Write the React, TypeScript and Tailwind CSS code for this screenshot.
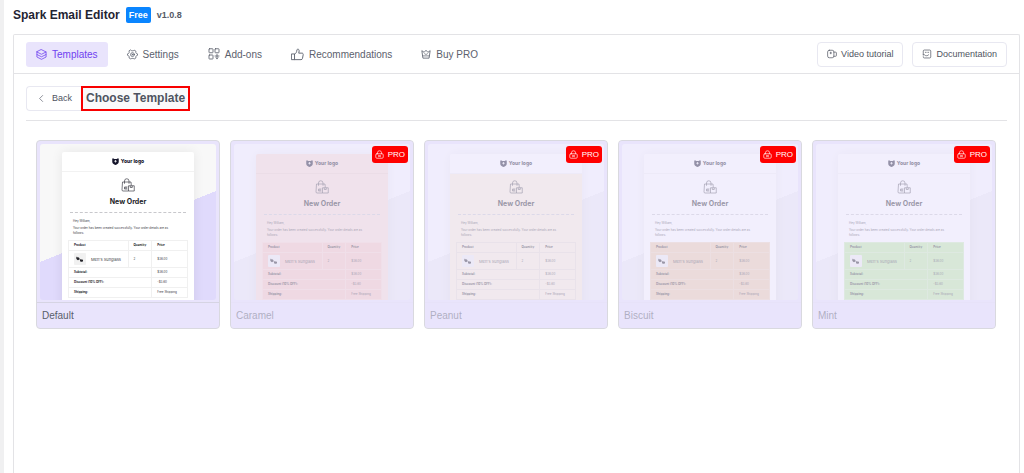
import type { ReactNode } from 'react'

interface IconProps {
  className?: string
  children: ReactNode
}

const Icon = ({ className = 'w-[11px] h-[11px]', children }: IconProps) => (
  <svg
    className={`${className} shrink-0`}
    viewBox="0 0 24 24"
    fill="none"
    stroke="currentColor"
    strokeWidth="1.7"
    strokeLinecap="round"
    strokeLinejoin="round"
    aria-hidden="true"
  >
    {children}
  </svg>
)

const LayersIcon = () => (
  <Icon>
    <path d="M12 1.500 22 6.500 12 11.500 2 6.500Z" />
    <path d="M2 6.500v5.500l10 5 10-5V6.500" />
    <path d="M2 12v5.500l10 5 10-5V12" />
  </Icon>
)

const SettingsIcon = () => (
  <Icon>
    <path d="M8.500 2.500 10.500 4h3l2-1.500 4 2.300-.3 2.700 1.300 2.200 2.500 1v3l-2.500 1-1.300 2.200.3 2.700-4 2.300-2-1.500h-3l-2 1.500-4-2.300.3-2.700-1.300-2.200-2.500-1v-3l2.500-1 1.300-2.200-.3-2.700Z" />
    <circle cx="12" cy="12.200" r="4.200" />
    <circle cx="12" cy="12.200" r="1" />
  </Icon>
)

const AddonsIcon = () => (
  <Icon className="w-3 h-3">
    <rect x="2" y="1.500" width="8" height="8" rx="1" />
    <rect x="14" y="1.500" width="8" height="8" rx="1" />
    <rect x="2" y="14" width="8" height="8" rx="1" />
    <path d="M18 12.500v9M14 16h8M16 19.500l2 2 2-2" />
  </Icon>
)

const ThumbIcon = () => (
  <Icon className="w-[13px] h-[13px]">
    <path d="M1.500 11h5v10.500h-5Z" />
    <path d="M6.500 11.500C9.500 10 10.500 7.500 11 3.500c.3-2 4-2 4 1.500 0 2-.4 3-.8 4.500h6c1.800 0 2.600 1.200 2.300 2.800l-1.300 7c-.3 1.500-1.200 2.200-2.700 2.200h-12" />
  </Icon>
)

const CrownIcon = () => (
  <Icon className="w-[10px] h-[10px]">
    <path d="M4.500 21 2 4l5.500 4L12 3l4.500 5L22 4l-2.500 17Z" strokeWidth="2" />
    <path d="M4 16.500h16M8.500 11.500c2 2 5 2 7 0" />
  </Icon>
)

const VideoIcon = () => (
  <Icon className="w-[10px] h-[10px]">
    <rect x="1.500" y="3" width="15" height="18" rx="4" />
    <path d="M16.500 7.500h4c1.500 0 2 .6 2 2v6c0 1.400-.5 2-2 2h-4" />
    <path d="M9 7.500v4M7.500 9.500h3" />
  </Icon>
)

const DocIcon = () => (
  <Icon className="w-[10px] h-[10px]">
    <path d="M3 14V5c0-1.500.8-2.500 2.500-2.500h13c1.700 0 2.500 1 2.500 2.500v14c0 1.500-.8 2.500-2.500 2.500h-13C3.800 21.500 3 20.500 3 18.500" />
    <path d="M8 8h2M14 8h2M3 14h3c2 3 8 3 10 0" />
  </Icon>
)

const LockIcon = () => (
  <Icon className="w-[9px] h-[9px]">
    <rect x="2" y="10" width="20" height="12" rx="3" />
    <path d="M6.500 10V7.500a5.500 5.500 0 0 1 11 0V10" />
    <path d="m9 14 6 4M15 14l-6 4" />
  </Icon>
)

const BagIcon = () => (
  <svg className="w-[14px] h-[14px]" viewBox="0 0 28 28" fill="none" stroke="#33333c" strokeWidth="1.3" aria-hidden="true">
    <path d="M15 26H4c-1.500 0-2-1-2-2.200L3 8h17l.6 7" />
    <path d="M7 11.500V6a4.500 4.500 0 0 1 9 0v5.500" />
    <path d="M15 15.500h11.500V26H15ZM18.500 15.500v3.500h4v-3.500" />
    <path d="M7 18h6M7 22h6M7 18v4M10 18v4" />
  </svg>
)

const ShieldIcon = () => (
  <svg className="w-[7px] h-[7px]" viewBox="0 0 14 14" aria-hidden="true">
    <path d="M.5 1h3l1 1h5l1-1h3v6.500c0 3.500-3 5.500-6.500 6.300C3.500 13 .5 11 .5 7.500Z" fill="#15152b" />
    <path d="M7 4v5M4.500 6.500h5" stroke="#fff" strokeWidth="1.500" />
  </svg>
)

const GlassesIcon = () => (
  <svg className="w-[12px] h-[12px]" viewBox="0 0 24 24" aria-hidden="true">
    <rect width="24" height="24" rx="2" fill="#f1f1f1" />
    <path d="M4 9h6l1 3c-1 3-5 3-6 0ZM12 13l6 1c1 4-4 5-6 2Z" fill="#25252b" />
    <path d="m4 9 2-1 6 5 6 1" fill="none" stroke="#25252b" />
  </svg>
)

interface Template {
  name: string
  pro: boolean
  paper: string
  body: string
  table: string
  line: string
}

const templates: Template[] = [
  { name: 'Default', pro: false, paper: 'bg-white', body: 'bg-white', table: 'bg-white', line: 'border-[#f0f0f0]' },
  { name: 'Caramel', pro: true, paper: 'bg-[#fadfd4]', body: 'bg-[#fadfd4]', table: 'bg-[#f8c8bd]', line: 'border-[#f9d6cd]' },
  { name: 'Peanut', pro: true, paper: 'bg-white', body: 'bg-[#fcf0d9]', table: 'bg-[#fcf0d9]', line: 'border-[#e9dfcf]' },
  { name: 'Biscuit', pro: true, paper: 'bg-white', body: 'bg-white', table: 'bg-[#eecdaa]', line: 'border-[#f1d8bc]' },
  { name: 'Mint', pro: true, paper: 'bg-white', body: 'bg-white', table: 'bg-[#beeba2]', line: 'border-[#cdf0b8]' },
]

const totals = [
  ['Subtotal:', '$36.00'],
  ['Discount (10% OFF):', '-$3.60'],
  ['Shipping:', 'Free Shipping'],
]

const EmailPreview = ({ template }: { template: Template }) => {
  const { pro, paper, body, table, line } = template
  const cell = `border ${line} px-[5px] text-left align-middle`
  const backdrop = pro
    ? 'pt-2.5 bg-[linear-gradient(158deg,#fbfbff_52%,#eeeef4_52%)]'
    : 'pt-2 bg-[linear-gradient(158deg,#f8f8f8_52%,#e0dafc_52%)]'

  return (
    <div
      className={`h-[156px] overflow-hidden rounded-[3px] px-[22px] font-[Inter,sans-serif] text-[3px] leading-[5px] text-[#3c3c46] ${backdrop}`}
    >
      <div className={`h-[170px] rounded-t-[2px] shadow-[0_0_12px_rgba(0,0,0,0.08)] ${paper}`}>
        <div className="h-5 flex items-center justify-center gap-0.5 border-b border-black/5 text-[5px] font-extrabold text-[#15152b]">
          <ShieldIcon />
          Your logo
        </div>
        <div className={`h-[150px] px-1.5 ${body}`}>
          <div className="flex flex-col items-center pt-1.5">
            <BagIcon />
            <h4 className="mt-1 text-[7px] leading-3 font-bold text-[#1d1d28]">New Order</h4>
          </div>
          <div className="mx-0.5 mt-1 border-t border-dashed border-[#c8c8cc]" />
          <p className="mt-1.5 px-[5px]">Hey William,</p>
          <p className="mt-0.5 pl-[5px] pr-2.5">
            Your order has been created successfully. Your order details are as follows:
          </p>
          <table className={`mt-1 w-full table-fixed border-collapse ${table}`}>
            <thead>
              <tr className="h-2.5 text-[#1d1d28]">
                <th className={`${cell} w-1/2`}>Product</th>
                <th className={`${cell} w-1/5`}>Quantity</th>
                <th className={cell}>Price</th>
              </tr>
            </thead>
            <tbody>
              <tr className="h-[17px]">
                <td className={cell}>
                  <div className="flex items-center gap-[5px] text-[4px]">
                    <GlassesIcon />
                    Men's Sunglass
                  </div>
                </td>
                <td className={cell}>2</td>
                <td className={cell}>$36.00</td>
              </tr>
              {totals.map(([label, value]) => (
                <tr key={label} className="h-2.5">
                  <th colSpan={2} className={`${cell} text-[#1d1d28]`}>{label}</th>
                  <td className={cell}>{value}</td>
                </tr>
              ))}
            </tbody>
          </table>
        </div>
      </div>
    </div>
  )
}

const TemplateCard = ({ template }: { template: Template }) => {
  return (
    <article className="relative overflow-hidden rounded border border-[#d9d9df] bg-[#e9e4fc]">
      <div className="px-[3px] pt-[3px] pb-0.5">
        <EmailPreview template={template} />
      </div>
      <h3
        className={`h-[26px] border-t px-[5px] text-[10px] leading-[25px] text-[#595e6b] ${
          template.pro ? 'border-[#e4dff5]' : 'border-[#d6d4e3]'
        }`}
      >
        {template.name}
      </h3>
      {template.pro && (
        <div className="absolute inset-0 bg-[#e9e4fc]/60">
          <span className="absolute top-[5px] right-[5px] h-[17px] flex items-center gap-1 rounded-[3px] bg-[#ff0000] px-[3px] text-[8px] leading-[11px] text-white">
            <LockIcon />
            PRO
          </span>
        </div>
      )}
    </article>
  )
}

const navItems = [
  { label: 'Templates', icon: <LayersIcon /> },
  { label: 'Settings', icon: <SettingsIcon /> },
  { label: 'Add-ons', icon: <AddonsIcon /> },
  { label: 'Recommendations', icon: <ThumbIcon /> },
  { label: 'Buy PRO', icon: <CrownIcon /> },
]

const helpLinks = [
  { label: 'Video tutorial', icon: <VideoIcon /> },
  { label: 'Documentation', icon: <DocIcon /> },
]

const TopBar = ({ activeTab }: { activeTab: string }) => {
  return (
    <div className="h-[39px] flex items-center justify-between border-b border-[#e3e3e6] px-3">
      <nav className="flex items-center gap-[9px]">
        {navItems.map(({ label, icon }) => (
          <a
            key={label}
            href="#"
            className={`h-[25px] flex items-center gap-[5px] rounded-[3px] px-2.5 text-[10px] ${
              label === activeTab ? 'bg-[#e9e4fc] text-[#6f42f0]' : 'text-[#5c616d]'
            }`}
          >
            {icon}
            {label}
          </a>
        ))}
      </nav>
      <div className="flex items-center gap-[9px]">
        {helpLinks.map(({ label, icon }) => (
          <a
            key={label}
            href="#"
            className="h-[25px] flex items-center gap-1 rounded border border-[#e8e8f1] px-[9px] text-[9px] leading-[11px] text-[#4f5461]"
          >
            {icon}
            {label}
          </a>
        ))}
      </div>
    </div>
  )
}

const App = () => {
  return (
    <div className="min-h-screen flex flex-col border-l-4 border-[#f0f0f1] bg-white pl-[9px] pr-1 font-['Liberation_Sans',Arial,sans-serif]">
      <header className="h-[34px] flex items-center gap-1.5 pb-1">
        <h1 className="text-xs font-bold text-[#1f2433]">Spark Email Editor</h1>
        <span className="h-4 flex items-center rounded-[2px] bg-[#0a85ff] px-[3px] text-[9px] leading-[11px] font-bold text-white">Free</span>
        <span className="text-[9px] leading-[11px] font-bold text-[#555a66]">v1.0.8</span>
      </header>
      <main className="flex-1 rounded-t-[2px] border border-b-0 border-[#e3e3e6]">
        <TopBar activeTab="Templates" />
        <div className="mx-3 h-[47px] flex items-center border-b border-[#e3e3e6] pt-0.5">
          <button className="h-[25px] w-[55px] flex items-center gap-1.5 rounded-l border border-r-0 border-[#e8e8f1] pl-2.5 text-[9px] leading-[11px] text-[#4f5461]">
            <Icon className="w-[9px] h-[9px]">
              <path d="m15 4-8 8 8 8" />
            </Icon>
            Back
          </button>
          <h2 className="h-[25px] flex items-center border-2 border-[#f80000] bg-[#fafafb] px-[3px] text-xs font-bold text-[#4f5461]">
            Choose Template
          </h2>
        </div>
        <section className="grid grid-cols-5 gap-2.5 pt-[19px] pl-[22px] pr-[23px]">
          {templates.map((template) => (
            <TemplateCard key={template.name} template={template} />
          ))}
        </section>
      </main>
    </div>
  )
}

export default App
